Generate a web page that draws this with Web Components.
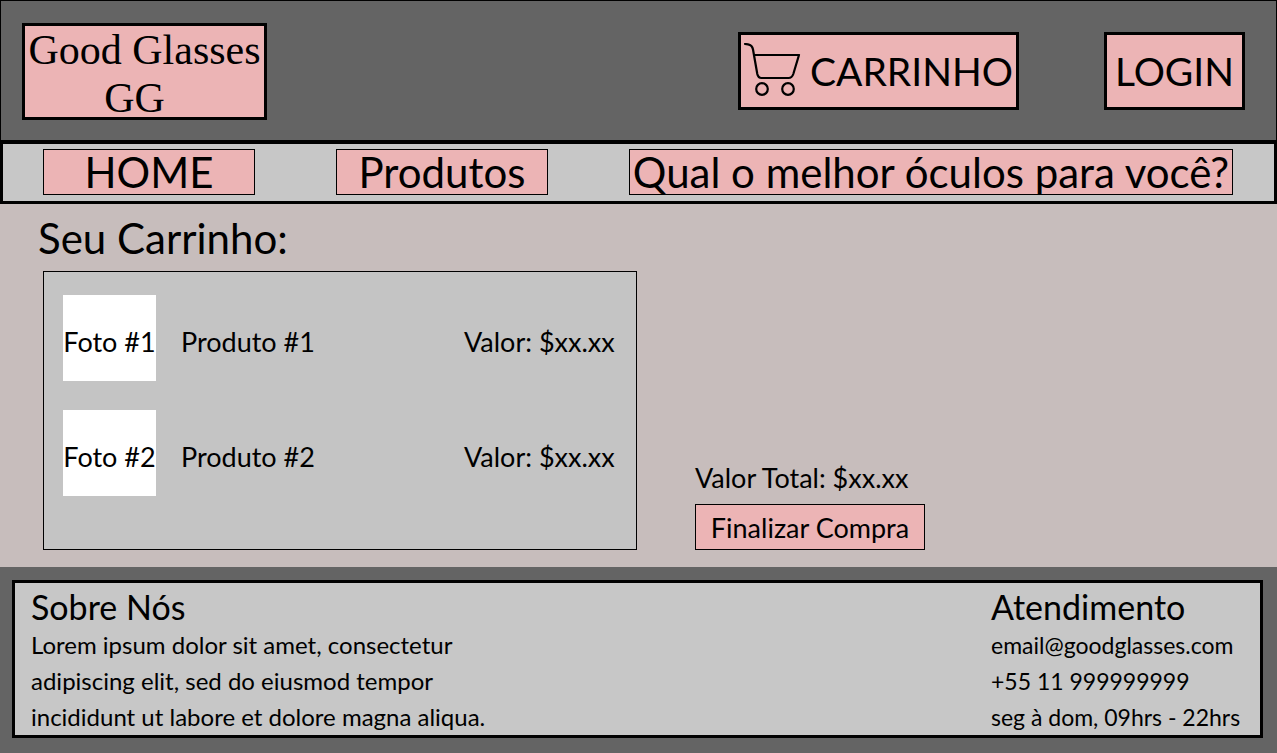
<!DOCTYPE html>
<html lang="pt-BR">
<head>
<meta charset="utf-8">
<meta name="viewport" content="width=device-width, initial-scale=1">
<title>Good Glasses - Carrinho</title>
<style>
  :root { --pink: #ecb4b5; --dark: #646464; --silver: #c7c7c7; --panel: #c4c4c4; --rose: #c7bdbc; }
  * { box-sizing: border-box; }
  body { margin: 0; color: #000; background: var(--rose); font-family: Lato, "Open Sans", sans-serif; }
</style>
</head>
<body>
<gg-page>
  <gg-header slot="header"></gg-header>
  <gg-nav slot="nav">
    <gg-nav-link href="#home">HOME</gg-nav-link>
    <gg-nav-link href="#produtos">Produtos</gg-nav-link>
    <gg-nav-link href="#guia" wide>Qual o melhor óculos para você?</gg-nav-link>
  </gg-nav>
  <gg-cart>
    <gg-cart-item><span slot="photo">Foto #1</span><span slot="name">Produto #1</span><span slot="price">Valor: $xx.xx</span></gg-cart-item>
    <gg-cart-item><span slot="photo">Foto #2</span><span slot="name">Produto #2</span><span slot="price">Valor: $xx.xx</span></gg-cart-item>
  </gg-cart>
  <gg-footer slot="footer"></gg-footer>
</gg-page>
<script>
const define = (name, html) => customElements.define(name, class extends HTMLElement {
  constructor() {
    super();
    const template = document.createElement('template');
    template.innerHTML = '<style>*{box-sizing:border-box}</style>' + html;
    this.attachShadow({ mode: 'open' }).append(template.content.cloneNode(true));
  }
  connectedCallback() {
    const link = this.shadowRoot.querySelector('a[data-nav]');
    if (link) link.href = this.getAttribute('href');
  }
});

define('gg-page', `
  <style>
    :host { display: flex; flex-direction: column; min-height: 100vh; }
    main { flex: 1; }
  </style>
  <slot name="header"></slot>
  <slot name="nav"></slot>
  <main><slot></slot></main>
  <slot name="footer"></slot>`);

define('gg-button', `
  <style>
    :host { display: block; }
    button { display: flex; align-items: center; justify-content: center; gap: 8px; width: 100%; height: 100%;
      margin: 0; padding: 0; border: var(--line, 3px) solid #000; background: var(--pink); color: inherit;
      font: inherit; white-space: nowrap; cursor: pointer; }
  </style>
  <button type="button"><slot></slot></button>`);

define('gg-header', `
  <style>
    :host { display: flex; align-items: flex-start; padding: 22px 31px 20px 21px; border: 1px solid #000; border-bottom: 0; background: var(--dark); }
    .logo { width: 245px; padding: 0; border: 3px solid #000; background: var(--pink); color: inherit; text-align: center;
      text-decoration: none; font-family: "Liberation Serif", serif; font-size: 42px; line-height: 48px; height: 97px; white-space: nowrap; }
    .logo span { display: block; }
    .logo .initials { padding-right: 20px; }
    .actions { display: flex; gap: 85px; margin: 9px 0 0 auto; font-size: 39px; }
    gg-button { height: 78px; }
    .cart { width: 281px; }
    .login { width: 141px; }
    svg { width: 58px; height: 56px; flex: none; }
  </style>
  <a class="logo" href="#home"><span>Good Glasses</span><span class="initials">GG</span></a>
  <div class="actions">
    <gg-button class="cart">
      <svg viewBox="0 0 58 56" fill="none" stroke="#000" stroke-width="2.200" stroke-linecap="round" stroke-linejoin="round" aria-hidden="true">
        <path d="M1 1 4 1.300Q8.300 2 9 6.500L13.300 31Q14.200 35 17.500 35H44.500Q48 35 49.300 31L55 12H10.500"/>
        <circle cx="18" cy="46" r="5.800"/><circle cx="44" cy="46" r="5.800"/>
      </svg>
      <span>CARRINHO</span>
    </gg-button>
    <gg-button class="login">LOGIN</gg-button>
  </div>`);

define('gg-nav', `
  <style>
    :host { display: block; border: 3px solid #000; border-top-width: 4px; background: var(--silver); }
    nav { display: flex; gap: 81px; padding: 5px 40px 6px; }
  </style>
  <nav aria-label="Principal"><slot></slot></nav>`);

define('gg-nav-link', `
  <style>
    :host { display: block; flex: 0 1 212px; }
    :host([wide]) { flex-basis: 604px; }
    a { display: block; height: 46px; border: 1px solid #000; background: var(--pink); color: inherit; text-align: center;
      text-decoration: none; font-size: 42px; line-height: 44px; white-space: nowrap; }
  </style>
  <a data-nav><slot></slot></a>`);

define('gg-cart', `
  <style>
    :host { display: block; padding: 10px 43px 17px; }
    h1 { margin: 0 0 9px -5px; font-size: 42px; line-height: 48px; font-weight: 400; }
    .row { display: flex; gap: 58px; align-items: flex-end; }
    .items { flex: 0 1 594px; display: flex; flex-direction: column; gap: 29px; padding: 23px 20px 53px 19px; border: 1px solid #000; background: var(--panel); }
    .summary { width: 230px; font-size: 27px; }
    p { margin: 0 0 10px; line-height: 32px; white-space: nowrap; }
    gg-button { --line: 1px; height: 46px; }
  </style>
  <h1>Seu Carrinho:</h1>
  <div class="row">
    <div class="items"><slot></slot></div>
    <div class="summary"><p>Valor Total: $xx.xx</p><gg-button>Finalizar Compra</gg-button></div>
  </div>`);

define('gg-cart-item', `
  <style>
    :host { display: grid; grid-template-columns: 93px 1fr 152px; column-gap: 25px; align-items: center; font-size: 27px; line-height: 32px; white-space: nowrap; }
    .photo { display: grid; place-items: center; height: 86px; padding-top: 8px; background: #fff; }
    .text { padding-top: 8px; }
  </style>
  <div class="photo"><slot name="photo"></slot></div>
  <div class="text"><slot name="name"></slot></div>
  <div class="text"><slot name="price"></slot></div>`);

define('gg-footer', `
  <style>
    :host { display: block; padding: 13px 14px 15px 12px; background: var(--dark); }
    footer { display: flex; justify-content: space-between; padding: 8px 10px 0 16px; border: 3px solid #000; background: var(--silver); }
    h2 { margin: 0 0 4px; font-size: 34px; line-height: 32px; font-weight: 400; }
    p, address { margin: 0; line-height: 36px; font-style: normal; }
    p { font-size: 24px; }
    address { font-size: 23px; }
    .about { width: 464px; }
    .contact { width: 259px; white-space: nowrap; }
    span, a { display: block; color: inherit; text-decoration: none; }
  </style>
  <footer>
    <section class="about"><h2>Sobre Nós</h2>
      <p><span>Lorem ipsum dolor sit amet, consectetur</span><span>adipiscing elit, sed do eiusmod tempor</span><span>incididunt ut labore et dolore magna aliqua.</span></p>
    </section>
    <section class="contact"><h2>Atendimento</h2>
      <address><a href="mailto:email@goodglasses.com">email@goodglasses.com</a><a href="tel:+5511999999999">+55 11 999999999</a><span>seg à dom, 09hrs - 22hrs</span></address>
    </section>
  </footer>`);
</script>
</body>
</html>
